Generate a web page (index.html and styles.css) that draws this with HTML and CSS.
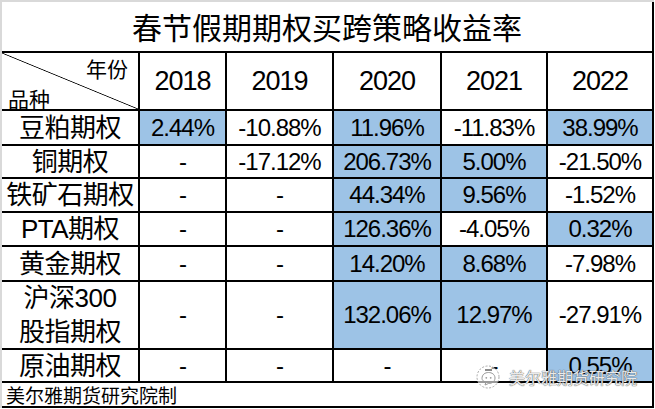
FILE: index.html
```html
<!DOCTYPE html>
<html lang="zh">
<head>
<meta charset="utf-8">
<title>春节假期期权买跨策略收益率</title>
<link rel="stylesheet" href="styles.css">
</head>
<body>
<div class="sheet">
  <div class="grid">
    <div class="cell title">春节假期期权买跨策略收益率</div>

    <div class="cell corner"><span class="c-top">年份</span><span class="c-bot">品种</span></div>
    <div class="cell year">2018</div>
    <div class="cell year">2019</div>
    <div class="cell year">2020</div>
    <div class="cell year">2021</div>
    <div class="cell year">2022</div>

    <div class="cell name">豆粕期权</div>
    <div class="cell num blue">2.44%</div>
    <div class="cell num">-10.88%</div>
    <div class="cell num blue">11.96%</div>
    <div class="cell num">-11.83%</div>
    <div class="cell num blue">38.99%</div>

    <div class="cell name">铜期权</div>
    <div class="cell num">-</div>
    <div class="cell num">-17.12%</div>
    <div class="cell num blue">206.73%</div>
    <div class="cell num blue">5.00%</div>
    <div class="cell num">-21.50%</div>

    <div class="cell name">铁矿石期权</div>
    <div class="cell num">-</div>
    <div class="cell num">-</div>
    <div class="cell num blue">44.34%</div>
    <div class="cell num blue">9.56%</div>
    <div class="cell num">-1.52%</div>

    <div class="cell name">PTA期权</div>
    <div class="cell num">-</div>
    <div class="cell num">-</div>
    <div class="cell num blue">126.36%</div>
    <div class="cell num">-4.05%</div>
    <div class="cell num blue">0.32%</div>

    <div class="cell name">黄金期权</div>
    <div class="cell num">-</div>
    <div class="cell num">-</div>
    <div class="cell num blue">14.20%</div>
    <div class="cell num blue">8.68%</div>
    <div class="cell num">-7.98%</div>

    <div class="cell name two">沪深300<br>股指期权</div>
    <div class="cell num">-</div>
    <div class="cell num">-</div>
    <div class="cell num blue">132.06%</div>
    <div class="cell num blue">12.97%</div>
    <div class="cell num">-27.91%</div>

    <div class="cell name">原油期权</div>
    <div class="cell num">-</div>
    <div class="cell num">-</div>
    <div class="cell num">-</div>
    <div class="cell num">-</div>
    <div class="cell num blue">0.55%</div>

    <div class="cell footer">美尔雅期货研究院制</div>
  </div>

  <div class="watermark">
    <svg class="wm-icon" width="28" height="26" viewBox="0 0 28 26">
      <circle cx="13" cy="13" r="11" fill="rgba(255,255,255,0.6)" stroke="#a8a8a8" stroke-width="1" stroke-dasharray="2 1.5"/>
      <path d="M7 14.5 C7 10.5 10 8.5 13.5 8.5 C17 8.5 20 10.5 20 14 C20 17.5 17 19.5 13.5 19.5 L10 21 L10.8 18.5 C8.5 17.5 7 16.2 7 14.5 Z" fill="none" stroke="#999" stroke-width="1"/>
      <circle cx="11.3" cy="13.8" r="0.9" fill="#999"/>
      <circle cx="15.7" cy="13.8" r="0.9" fill="#999"/>
      <path d="M10 6 L17 6" stroke="#666" stroke-width="1.5"/>
    </svg>
    <span class="wm-text">美尔雅期货研究院</span>
  </div>
</div>
</body>
</html>
```

FILE: styles.css
```css
html, body {
  margin: 0;
  padding: 0;
  background: #ffffff;
}

.sheet {
  position: relative;
  width: 652px;
  border-top: 2px solid #d9d9d9;
  border-left: 2px solid #d9d9d9;
  font-family: "Liberation Sans", "Noto Sans CJK SC", sans-serif;
  color: #000;
}

.grid {
  display: grid;
  grid-template-columns: 138px 87px 107px 108px 106px 106px;
  grid-template-rows: 51px 58px 35px 33px 34px 34px 35px 68px 33px 25px;
}

.cell {
  box-sizing: border-box;
  border-right: 2px solid #000;
  border-bottom: 2px solid #000;
  display: flex;
  align-items: center;
  justify-content: center;
  overflow: hidden;
  white-space: nowrap;
}

.title {
  grid-column: 1 / -1;
  font-family: "Noto Sans CJK SC", sans-serif;
  font-size: 30px;
  padding-bottom: 2px;
}

.corner {
  flex-direction: column;
  align-items: stretch;
  justify-content: space-between;
  padding: 3px 10px 0 6px;
  font-family: "Noto Sans CJK SC", sans-serif;
  font-size: 21px;
  line-height: 24px;
  background: linear-gradient(to top right, transparent calc(50% - 0.8px), #000 50%, transparent calc(50% + 0.8px));
}

.c-top {
  align-self: flex-end;
}

.c-bot {
  align-self: flex-start;
  margin-bottom: -1px;
}

.year {
  font-size: 27px;
  letter-spacing: -1px;
}

.name {
  font-size: 26px;
  line-height: 34px;
  letter-spacing: -0.5px;
}

.two {
  text-align: center;
  white-space: normal;
}

.num {
  font-size: 24px;
  letter-spacing: -1px;
}

.blue {
  background: #9dc3e6;
}

.footer {
  grid-column: 1 / -1;
  justify-content: flex-start;
  overflow: visible;
  padding-left: 4px;
  font-family: "Noto Sans CJK SC", sans-serif;
  font-size: 19px;
  line-height: 22px;
}

.watermark {
  position: absolute;
  left: 473px;
  top: 362px;
  display: flex;
  align-items: center;
  gap: 6px;
}

.wm-text {
  font-family: "Noto Sans CJK SC", sans-serif;
  font-size: 16px;
  color: rgba(255, 255, 255, 0.9);
  text-shadow: 0 0 1px #555, 0 0 1px #555;
}
```
